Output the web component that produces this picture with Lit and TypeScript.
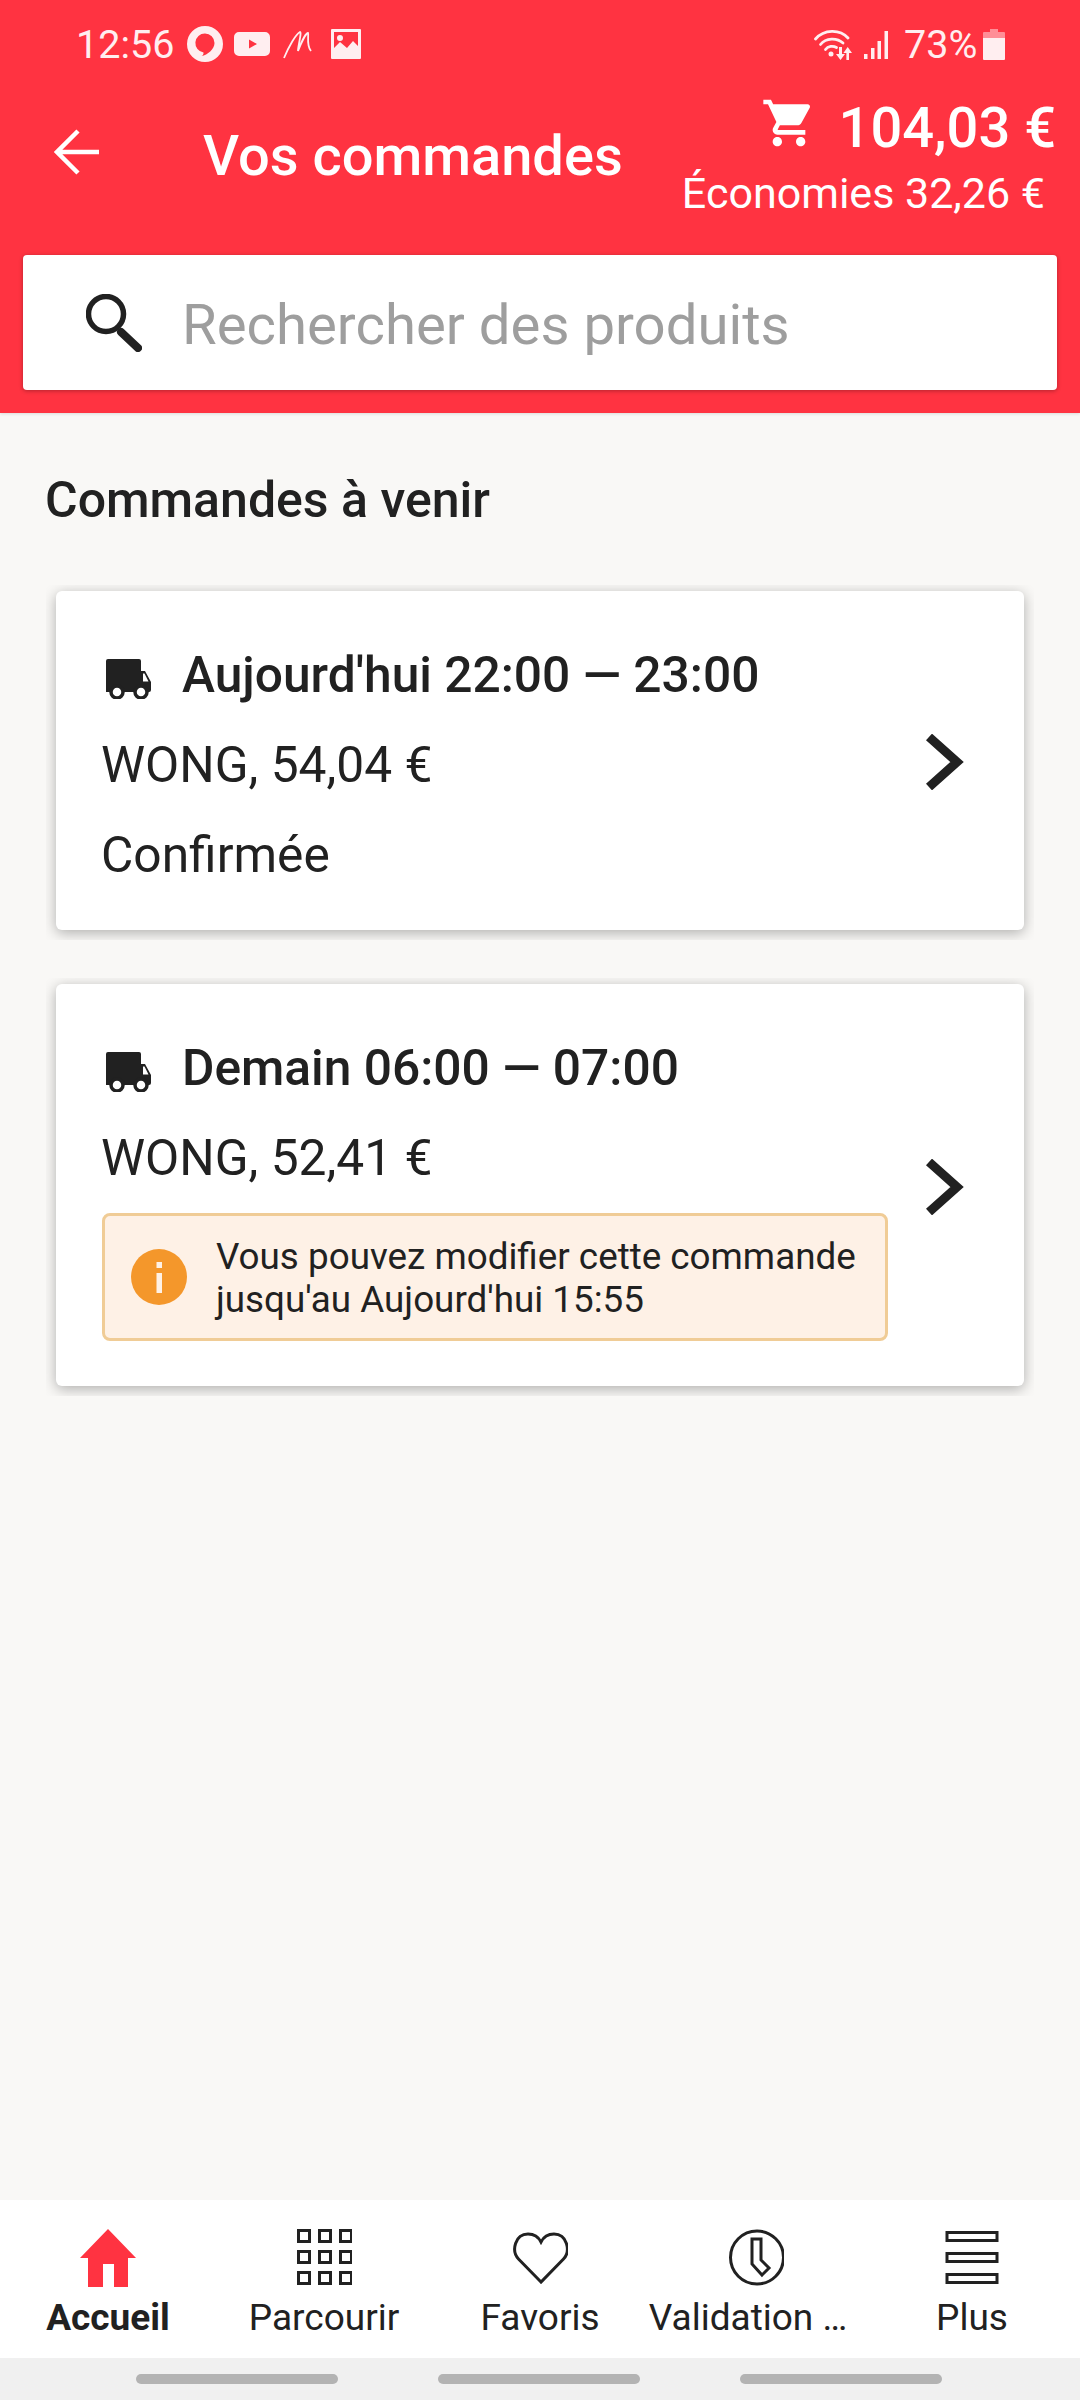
import { LitElement, css, html, svg } from 'lit';
import { customElement } from 'lit/decorators.js';

const truck = html`<svg class="truck" viewBox="0 0 46 40" width="46" height="40">
  <path fill="#212121" d="M2 0h31a2 2 0 0 1 2 2v10h4l6 11v8a2 2 0 0 1-2 2H0V2a2 2 0 0 1 2-2z"/>
  <path fill="#fff" d="M37 14.500h1.500l4 8h-5.500z"/>
  <circle cx="11" cy="33" r="6" fill="#fff" stroke="#212121" stroke-width="3.500"/>
  <circle cx="35" cy="33" r="6" fill="#fff" stroke="#212121" stroke-width="3.500"/>
</svg>`;

const chevron = html`<svg class="chevron" viewBox="0 0 42 56" width="42" height="56">
  <path d="M4 3l28 25L4 53" fill="none" stroke="#212121" stroke-width="9"/>
</svg>`;

const tabIcons = {
  home: svg`<path fill="#ff3341" d="M28 0L56 29H48V58H34V35H23V58H8V29H0z"/>`,
  grid: svg`<g fill="none" stroke="#212121" stroke-width="3" transform="translate(1 0)">
    ${[0, 21, 42].flatMap((y) =>
      [0, 21, 42].map((x) => svg`<rect x=${x + 1.5} y=${y + 1.500} width="11" height="11"/>`)
    )}
  </g>`,
  heart: svg`<path fill="none" stroke="#212121" stroke-width="3" transform="translate(1 0)" d="M28 53L5.500 30C-2 22 2 5 15 5c6 0 10.500 3 13 8C30.500 8 35 5 41 5c13 0 17 17 9.500 25z"/>`,
  clock: svg`<g fill="none" stroke="#212121" stroke-width="3" transform="translate(1 0)">
    <circle cx="28" cy="28.500" r="26.500"/>
    <path d="M23 10h9v21l8 8-7 7-10-11z"/>
  </g>`,
  menu: svg`<g fill="none" stroke="#212121" stroke-width="3">
    <rect x="3" y="3.500" width="50" height="8"/>
    <rect x="3" y="24.500" width="50" height="8"/>
    <rect x="3" y="45.500" width="50" height="8"/>
  </g>`,
};

const tabs = [
  { label: 'Accueil', icon: tabIcons.home, active: true, cut: false },
  { label: 'Parcourir', icon: tabIcons.grid, active: false, cut: false },
  { label: 'Favoris', icon: tabIcons.heart, active: false, cut: false },
  { label: 'Validation …', icon: tabIcons.clock, active: false, cut: true },
  { label: 'Plus', icon: tabIcons.menu, active: false, cut: false },
];

@customElement('app-root')
export class AppRoot extends LitElement {
  renderStatus() {
    return html`<div class="status">
      <span class="clock">12:56</span>
      <svg class="st-chat" viewBox="0 0 36 36" width="36" height="36">
        <path fill-rule="evenodd" fill="#ffeef0" d="M18 0a18 18 0 1 1 0 36a18 18 0 0 1 0-36zM18 7.500a9.500 9.500 0 0 0-1.500 18.900c.3 1.500-.6 2.900-2 3.600c6-.8 13-7 13-13a9.500 9.500 0 0 0-9.500-9.500z"/>
      </svg>
      <svg class="st-yt" viewBox="0 0 36 24" width="36" height="24">
        <path fill-rule="evenodd" fill="#ffeef0" d="M5 0h26a5 5 0 0 1 5 5v14a5 5 0 0 1-5 5H5a5 5 0 0 1-5-5V5a5 5 0 0 1 5-5zM15 7.500v9l8-4.500z"/>
      </svg>
      <svg class="st-m" viewBox="0 0 30 30" width="30" height="30">
        <path fill="none" stroke="#ffeef0" stroke-width="1.800" d="M1 29C6 17 13 5 17 3c2 0 -2 14 -2 19C18 14 23 4 25 4c1 2 -2 12 3 18"/>
      </svg>
      <svg class="st-img" viewBox="0 0 30 30" width="30" height="30">
        <path fill-rule="evenodd" fill="#ffeef0" d="M1 0h28a1 1 0 0 1 1 1v28a1 1 0 0 1-1 1H1a1 1 0 0 1-1-1V1a1 1 0 0 1 1-1zM3 3v16l6-6 7 6 6-7 5 5V3zM9 6a3 3 0 1 1 0 6a3 3 0 0 1 0-6z"/>
      </svg>
      <span class="spacer"></span>
      <svg class="st-wifi" viewBox="0 0 41 31" width="41" height="31">
        <g fill="none" stroke="#ffeef0" stroke-width="2.800" stroke-linecap="round">
          <path d="M1.500 10C10 0 26 0 34 9"/>
          <path d="M6.500 15.500C12 8.500 23 8.500 29 14"/>
          <path d="M11.500 20.500C14 17 19 16.500 22.500 18.500"/>
        </g>
        <circle cx="17" cy="25" r="2.500" fill="#ffeef0"/>
        <path fill="#ffeef0" d="M25 18h3v7h3l-4.500 6-4.500-6h3zM35 31h-2.600v-7h-3l4.300-6 4.300 6h-3z"/>
      </svg>
      <svg class="st-sig" viewBox="0 0 26 29" width="26" height="29">
        <path fill="#ffeef0" d="M0 24h3.500v5H0zM7 18h3.500v11H7zM13.500 11H17v18h-3.500zM20.500 1H24v28h-3.500z"/>
      </svg>
      <span class="pct">73%</span>
      <svg class="st-bat" viewBox="0 0 22 31" width="22" height="31">
        <path fill="#ff8e97" d="M7 0h8v3h6a1 1 0 0 1 1 1v5H0V4a1 1 0 0 1 1-1h6z"/>
        <path fill="#ffeef0" d="M0 9h22v21a1 1 0 0 1-1 1H1a1 1 0 0 1-1-1z"/>
      </svg>
    </div>`;
  }

  renderHeader() {
    return html`<header>
      ${this.renderStatus()}
      <div class="toolbar">
        <svg class="back" viewBox="0 0 46 46" width="46" height="46">
          <path d="M45 23H4M24 2L3 23l21 21" fill="none" stroke="#fff" stroke-width="4.500"/>
        </svg>
        <h1>Vos commandes</h1>
        <div class="totals">
          <div class="price">
            <svg viewBox="0 0 24 24" width="56" height="56">
              <path fill="#fff" d="M7 18c-1.100 0-1.990.9-1.990 2S5.900 22 7 22s2-.9 2-2-.9-2-2-2zM1 2v2h2l3.600 7.590-1.350 2.450c-.16.28-.25.61-.25.96 0 1.100.9 2 2 2h12v-2H7.420c-.14 0-.25-.11-.25-.25l.03-.12.9-1.630h7.450c.75 0 1.410-.41 1.750-1.030l3.580-6.490c.08-.14.12-.31.12-.48 0-.55-.45-1-1-1H5.210l-.94-2H1zm16 16c-1.100 0-1.990.9-1.990 2s.89 2 1.990 2 2-.9 2-2-.9-2-2-2z"/>
            </svg>
            <span>104,03 €</span>
          </div>
          <div class="savings">Économies 32,26 €</div>
        </div>
      </div>
      <div class="search">
        <svg viewBox="0 0 56 58" width="56" height="58">
          <circle cx="20" cy="20" r="17.500" fill="none" stroke="#212121" stroke-width="5.500"/>
          <path d="M35 38l17 16" stroke="#212121" stroke-width="8" stroke-linecap="round"/>
        </svg>
        <span>Rechercher des produits</span>
      </div>
    </header>`;
  }

  render() {
    return html`
      ${this.renderHeader()}
      <main>
        <h2>Commandes à venir</h2>
        <div class="clip">
          <div class="card">
            <div class="body">
              <div class="row title">${truck}<span>Aujourd'hui 22:00 — 23:00</span></div>
              <div class="row">WONG, 54,04 €</div>
              <div class="row">Confirmée</div>
            </div>
            ${chevron}
          </div>
        </div>
        <div class="clip">
          <div class="card">
            <div class="body">
              <div class="row title">${truck}<span>Demain 06:00 — 07:00</span></div>
              <div class="row">WONG, 52,41 €</div>
              <div class="notice">
                <svg viewBox="0 0 56 56" width="56" height="56">
                  <circle cx="28" cy="28" r="28" fill="#f4972b"/>
                  <rect x="25.500" y="13" width="5.500" height="6" fill="#fef1e6"/>
                  <rect x="25.500" y="24" width="5.500" height="20" fill="#fef1e6"/>
                </svg>
                <p>Vous pouvez modifier cette commande<br />jusqu'au Aujourd'hui 15:55</p>
              </div>
            </div>
            ${chevron}
          </div>
        </div>
      </main>
      <nav>
        ${tabs.map(
          (t) => html`<div class="tab ${t.active ? 'active' : ''} ${t.cut ? 'cut' : ''}">
            <svg viewBox="0 0 56 58" width="56" height="58">${t.icon}</svg>
            <span>${t.label}</span>
          </div>`
        )}
      </nav>
      <div class="sysbar"><i></i><i></i><i></i></div>
    `;
  }

  static styles = css`
    :host {
      display: flex;
      flex-direction: column;
      min-height: 2400px;
      background: #f9f8f6;
      font-family: Roboto, sans-serif;
      color: #212121;
    }

    header {
      background: #ff3341;
      height: 413px;
      box-sizing: border-box;
      box-shadow: 0 1px 3px rgba(0, 0, 0, 0.12);
    }

    .status {
      display: flex;
      align-items: center;
      height: 88px;
      padding: 0 75px 0 76px;
      color: #ffeef0;
      font-size: 39.500px;
    }
    .clock {
      width: 111px;
    }
    .st-yt {
      margin-left: 11px;
    }
    .st-m {
      margin-left: 13px;
    }
    .st-img {
      margin-left: 18px;
    }
    .spacer {
      flex: 1;
    }
    .st-sig {
      margin-left: 9px;
    }
    .pct {
      margin-left: 14px;
      width: 79px;
    }

    .toolbar {
      display: flex;
      height: 167px;
      padding-left: 54px;
    }
    .back {
      margin-top: 41px;
    }
    h1 {
      margin: 41px 0 0 103px;
      font-size: 56px;
      line-height: 54px;
      font-weight: 500;
      color: #fff;
    }
    .totals {
      margin-left: auto;
      padding: 7px 24px 0 0;
      display: flex;
      flex-direction: column;
      align-items: flex-end;
      color: #fff;
    }
    .price {
      display: flex;
      align-items: center;
      gap: 22px;
      height: 66px;
      font-size: 56px;
      font-weight: 500;
    }
    .price svg {
      margin-bottom: 10px;
    }
    .savings {
      margin: 2px 11px 0 0;
      font-size: 43px;
      line-height: 60px;
    }

    .search {
      display: flex;
      align-items: center;
      box-sizing: border-box;
      height: 135px;
      margin: 0 23px;
      padding-left: 63px;
      gap: 40px;
      background: #fff;
      border-radius: 4px;
      box-shadow: 0 1px 4px rgba(0, 0, 0, 0.3);
      font-size: 56.300px;
      color: #9e9e9e;
    }
    .search span {
      padding-top: 4px;
    }

    main {
      flex: 1;
    }
    h2 {
      margin: 0;
      padding: 64px 46px 0 45px;
      font-size: 50px;
      line-height: 46px;
      font-weight: 500;
    }

    .clip {
      margin: 38px 46px 0 46px;
      padding: 6px 10px 10px;
      overflow: hidden;
    }
    h2 + .clip {
      margin-top: 62px;
    }
    .card {
      display: flex;
      align-items: center;
      padding: 39px 57px 30px 46px;
      background: #fff;
      border-radius: 6px;
      box-shadow: 0 3px 14px rgba(0, 0, 0, 0.3);
    }
    .body {
      flex: 1;
    }
    .chevron {
      margin-bottom: 6px;
    }
    .row {
      display: flex;
      align-items: center;
      height: 90px;
      margin-left: -1px;
      font-size: 49.700px;
    }
    .title {
      font-weight: 500;
    }
    .truck {
      margin: 8px 30px 0 5px;
    }

    .notice {
      display: flex;
      align-items: center;
      box-sizing: border-box;
      width: 786px;
      height: 128px;
      margin: 10px 0 15px;
      padding-left: 26px;
      gap: 29px;
      background: #fef1e6;
      border: 3px solid #f0cc96;
      border-radius: 8px;
    }
    .notice p {
      margin: 0;
      padding-top: 2px;
      font-size: 36.800px;
      line-height: 43px;
    }

    nav {
      display: grid;
      grid-template-columns: repeat(5, 1fr);
      height: 158px;
      background: #fff;
    }
    .tab {
      display: flex;
      flex-direction: column;
      align-items: center;
      padding-top: 29px;
      font-size: 37px;
    }
    .tab span {
      margin-top: 9px;
      line-height: 44px;
      white-space: nowrap;
    }
    .tab.active span {
      font-weight: 700;
    }
    .tab.cut span {
      padding-right: 16px;
    }

    .sysbar {
      display: flex;
      height: 42px;
      padding: 16px 0 0 136px;
      box-sizing: border-box;
      background: #f0f0f0;
      gap: 100px;
    }
    .sysbar i {
      width: 202px;
      height: 10px;
      border-radius: 5px;
      background: #b3b3b3;
    }
  `;
}
